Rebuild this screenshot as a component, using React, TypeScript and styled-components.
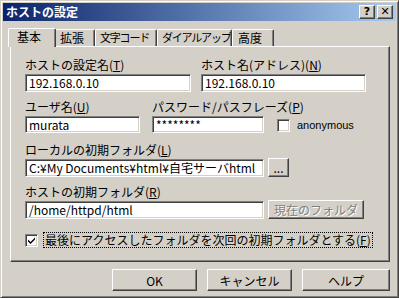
import React from 'react';
import styled, { createGlobalStyle, css } from 'styled-components';

const GlobalStyle = createGlobalStyle`
  html, body {
    margin: 0;
    padding: 0;
    background: #d4d0c8;
  }
  body {
    font-family: "Noto Sans CJK JP", "Noto Sans", sans-serif;
    font-size: 12px;
  }
`;

const raised = css`
  border: 1px solid;
  border-color: #ffffff #404040 #404040 #ffffff;
  box-shadow: inset -1px -1px #808080, inset 1px 1px #d4d0c8;
`;

const sunken = css`
  border: 1px solid;
  border-color: #808080 #ffffff #ffffff #808080;
  box-shadow: inset 1px 1px #404040, inset -1px -1px #d4d0c8;
`;

const Window = styled.div`
  width: 399px;
  height: 298px;
  box-sizing: border-box;
  background: #d4d0c8;
  border: 1px solid;
  border-color: #d4d0c8 #404040 #404040 #d4d0c8;
  box-shadow: inset 1px 1px #ffffff, inset -1px -1px #808080;
  padding: 2px;
  display: flex;
  flex-direction: column;
  color: #000;
`;

const TitleBar = styled.div`
  height: 18px;
  display: flex;
  align-items: center;
  justify-content: space-between;
  padding: 0 3px 0 3px;
  background: linear-gradient(to right, #0a246a, #a6caf0);
`;

const Title = styled.span`
  color: #fff;
  font-weight: bold;
  font-size: 12px;
  line-height: 14px;
`;

const TitleButtons = styled.div`
  display: flex;
  gap: 2px;
`;

const TitleButton = styled.div`
  width: 16px;
  height: 14px;
  box-sizing: border-box;
  ${raised};
  background: #d4d0c8;
  display: flex;
  align-items: center;
  justify-content: center;
  font-family: "DejaVu Sans", sans-serif;
  font-weight: bold;
  font-size: 11px;
  line-height: 12px;
`;

const Body = styled.div`
  padding: 7px 6px 0 7px;
  display: flex;
  flex-direction: column;
`;

const TabRow = styled.div`
  display: flex;
  height: 18px;
  align-items: flex-end;
  position: relative;
  z-index: 1;
`;

const Tab = styled.div<{ $active?: boolean; $w: number; $tight?: boolean }>`
  width: ${p => p.$w}px;
  box-sizing: border-box;
  height: ${p => (p.$active ? 19 : 17)}px;
  margin: ${p => (p.$active ? '0 -2px -1px -2px' : '0')};
  padding-left: ${p => (p.$active ? 8 : p.$tight ? 4 : 5)}px;
  background: #d4d0c8;
  border-left: 1px solid #fff;
  border-top: 1px solid #fff;
  border-right: 1px solid #404040;
  box-shadow: inset -1px 0 #808080;
  border-radius: 2px 2px 0 0;
  line-height: 15px;
  font-size: ${p => (p.$tight ? 11 : 12)}px;
  letter-spacing: ${p => (p.$tight ? -1.2 : 0)}px;
  white-space: nowrap;
  overflow: hidden;
  position: relative;
  z-index: ${p => (p.$active ? 2 : 1)};
`;

const Panel = styled.div`
  height: 216px;
  box-sizing: border-box;
  ${raised};
  padding: 11px 0 0 14px;
  display: flex;
  flex-direction: column;
`;

const Row = styled.div<{ $top?: number }>`
  display: flex;
  align-items: flex-end;
  margin-top: ${p => p.$top ?? 0}px;
`;

const Field = styled.div<{ $w: number; $gap?: number }>`
  display: flex;
  flex-direction: column;
  width: ${p => p.$w}px;
  margin-right: ${p => p.$gap ?? 0}px;
`;

const Label = styled.label`
  font-size: 12px;
  line-height: 14px;
  height: 16px;
  white-space: nowrap;
  u { text-decoration: underline; }
`;

const Input = styled.div<{ $h?: number }>`
  width: 100%;
  height: ${p => p.$h ?? 18}px;
  box-sizing: border-box;
  ${sunken};
  background: #fff;
  padding: 0 3px;
  font-size: 12px;
  line-height: ${p => (p.$h ?? 18) - 2}px;
  white-space: nowrap;
  overflow: hidden;
`;

const Button = styled.div<{ $w: number; $h?: number; $disabled?: boolean }>`
  width: ${p => p.$w}px;
  height: ${p => p.$h ?? 19}px;
  box-sizing: border-box;
  ${raised};
  background: #d4d0c8;
  display: flex;
  align-items: center;
  justify-content: center;
  font-size: 12px;
  color: ${p => (p.$disabled ? '#808080' : '#000')};
  text-shadow: ${p => (p.$disabled ? '1px 1px #fff' : 'none')};
  white-space: nowrap;
`;

const CheckBox = styled.div`
  width: 13px;
  height: 13px;
  box-sizing: border-box;
  ${sunken};
  background: #fff;
  display: flex;
  align-items: center;
  justify-content: center;
  flex-shrink: 0;
`;

const CheckRow = styled.div<{ $left?: number; $top?: number }>`
  display: flex;
  align-items: center;
  gap: 5px;
  margin-left: ${p => p.$left ?? 0}px;
  margin-top: ${p => p.$top ?? 0}px;
`;

const CheckLabel = styled.span<{ $focus?: boolean }>`
  font-family: ${p => (p.$focus ? 'inherit' : '"Liberation Sans", sans-serif')};
  font-size: ${p => (p.$focus ? 12 : 11)}px;
  line-height: 14px;
  padding: 0 1px;
  border: 1px ${p => (p.$focus ? 'dotted #000' : 'solid transparent')};
  white-space: nowrap;
`;

const Footer = styled.div`
  display: flex;
  justify-content: flex-end;
  gap: 10px;
  margin-top: 7px;
`;

const Check = () => (
  <svg width="9" height="9" viewBox="0 0 9 9">
    <path d="M1 3.5 L3.5 6 L8 1.5 L8 3.5 L3.5 8 L1 5.5 Z" fill="#000" />
  </svg>
);

export default function App() {
  return (
    <>
      <GlobalStyle />
      <Window>
        <TitleBar>
          <Title>ホストの設定</Title>
          <TitleButtons>
            <TitleButton>?</TitleButton>
            <TitleButton>✕</TitleButton>
          </TitleButtons>
        </TitleBar>
        <Body>
          <TabRow>
            <Tab $active $w={48}>基本</Tab>
            <Tab $w={41}>拡張</Tab>
            <Tab $w={62} $tight>文字コード</Tab>
            <Tab $w={75} $tight>ダイアルアップ</Tab>
            <Tab $w={42}>高度</Tab>
          </TabRow>
          <Panel>
            <Row>
              <Field $w={166} $gap={10}>
                <Label>ホストの設定名(<u>T</u>)</Label>
                <Input>192.168.0.10</Input>
              </Field>
              <Field $w={165}>
                <Label>ホスト名(アドレス)(<u>N</u>)</Label>
                <Input>192.168.0.10</Input>
              </Field>
            </Row>
            <Row $top={8}>
              <Field $w={115} $gap={12}>
                <Label>ユーザ名(<u>U</u>)</Label>
                <Input $h={17}>murata</Input>
              </Field>
              <Field $w={112}>
                <Label>パスワード/パスフレーズ(<u>P</u>)</Label>
                <Input $h={17}>********</Input>
              </Field>
              <CheckRow $left={13}>
                <CheckBox />
                <CheckLabel>anonymous</CheckLabel>
              </CheckRow>
            </Row>
            <Row $top={10}>
              <Field $w={239} $gap={4}>
                <Label>ローカルの初期フォルダ(<u>L</u>)</Label>
                <Input>C:¥My Documents¥html¥自宅サーバhtml</Input>
              </Field>
              <Button $w={21} $h={19}>...</Button>
            </Row>
            <Row $top={8}>
              <Field $w={239} $gap={4}>
                <Label>ホストの初期フォルダ(<u>R</u>)</Label>
                <Input>/home/httpd/html</Input>
              </Field>
              <Button $w={96} $h={19} $disabled>現在のフォルダ</Button>
            </Row>
            <CheckRow $top={13}>
              <CheckBox><Check /></CheckBox>
              <CheckLabel $focus>最後にアクセスしたフォルダを次回の初期フォルダとする(<u>F</u>)</CheckLabel>
            </CheckRow>
          </Panel>
          <Footer>
            <Button $w={85} $h={22}>OK</Button>
            <Button $w={85} $h={22}>キャンセル</Button>
            <Button $w={88} $h={22}>ヘルプ</Button>
          </Footer>
        </Body>
      </Window>
    </>
  );
}
